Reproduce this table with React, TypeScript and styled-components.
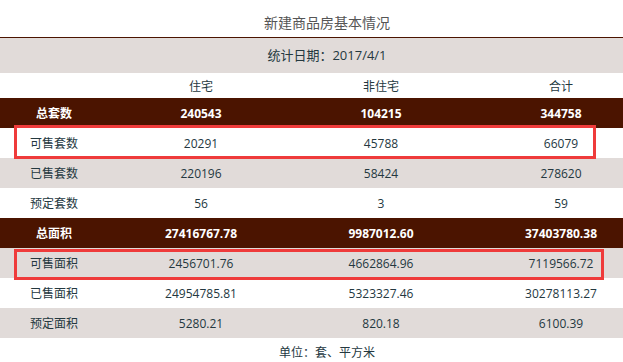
import React from "react";
import styled, { createGlobalStyle } from "styled-components";

const Global = createGlobalStyle`
  html, body {
    margin: 0;
    padding: 0;
    background: #ffffff;
    overflow: hidden;
  }
  body {
    font-family: "Open Sans", "Noto Sans CJK SC", sans-serif;
  }
`;

const Page = styled.div`
  position: relative;
  width: 654px;
`;

const Title = styled.div`
  height: 29px;
  padding-top: 8px;
  line-height: 29px;
  text-align: center;
  font-size: 14px;
  color: #555555;
`;

const DateBand = styled.div`
  height: 35px;
  line-height: 35px;
  border-top: 1px solid #4b1400;
  background: #e1dbd9;
  text-align: center;
  font-size: 13px;
  color: #24383f;
`;

type Tone = "dark" | "gray" | "white" | "head";

const Row = styled.div<{ $tone: Tone }>`
  display: grid;
  grid-template-columns: 108px 186px 174px 186px;
  align-items: center;
  height: ${(p) => (p.$tone === "head" ? "25px" : "30px")};
  background: ${(p) =>
    p.$tone === "dark" ? "#4b1400" : p.$tone === "gray" ? "#e1dbd9" : "#ffffff"};
  color: ${(p) => (p.$tone === "dark" ? "#ffffff" : "#24383f")};
  font-weight: ${(p) => (p.$tone === "dark" ? 700 : 400)};
  font-size: 12px;
`;

const Cell = styled.div`
  text-align: center;
  white-space: nowrap;
`;

const Footer = styled.div`
  height: 30px;
  line-height: 30px;
  text-align: center;
  font-size: 12px;
  color: #24383f;
`;

const Highlight = styled.div`
  position: absolute;
  box-sizing: border-box;
  border: 3px solid #ef3b3b;
  pointer-events: none;
`;

const rows: { tone: Tone; cells: string[] }[] = [
  { tone: "dark", cells: ["总套数", "240543", "104215", "344758"] },
  { tone: "white", cells: ["可售套数", "20291", "45788", "66079"] },
  { tone: "gray", cells: ["已售套数", "220196", "58424", "278620"] },
  { tone: "white", cells: ["预定套数", "56", "3", "59"] },
  { tone: "dark", cells: ["总面积", "27416767.78", "9987012.60", "37403780.38"] },
  { tone: "gray", cells: ["可售面积", "2456701.76", "4662864.96", "7119566.72"] },
  { tone: "white", cells: ["已售面积", "24954785.81", "5323327.46", "30278113.27"] },
  { tone: "gray", cells: ["预定面积", "5280.21", "820.18", "6100.39"] },
];

const marks = [
  { top: 125, left: 14, width: 582, height: 34 },
  { top: 249, left: 14, width: 590, height: 31 },
];

export default function App() {
  return (
    <>
      <Global />
      <Page>
        <Title>新建商品房基本情况</Title>
        <DateBand>统计日期：2017/4/1</DateBand>
        <Row $tone="head">
          <Cell />
          <Cell>住宅</Cell>
          <Cell>非住宅</Cell>
          <Cell>合计</Cell>
        </Row>
        {rows.map((r, i) => (
          <Row key={i} $tone={r.tone}>
            {r.cells.map((c, j) => (
              <Cell key={j}>{c}</Cell>
            ))}
          </Row>
        ))}
        <Footer>单位：套、平方米</Footer>
        {marks.map((m, i) => (
          <Highlight
            key={i}
            style={{ top: m.top, left: m.left, width: m.width, height: m.height }}
          />
        ))}
      </Page>
    </>
  );
}
